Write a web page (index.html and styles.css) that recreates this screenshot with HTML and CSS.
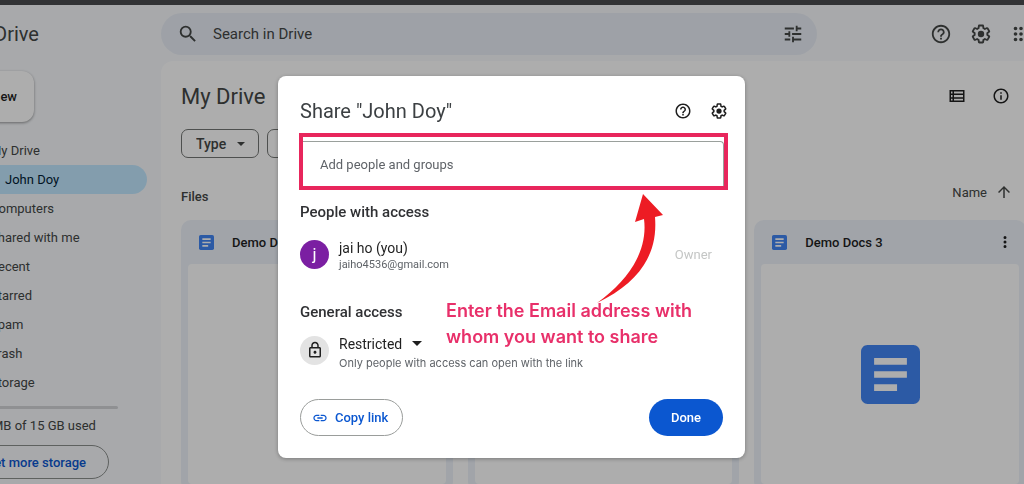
FILE: index.html
```html
<!DOCTYPE html>
<html lang="en">
<head>
    <meta charset="UTF-8">
    <meta name="viewport" content="width=device-width, initial-scale=1.0">
    <title>My Drive - Google Drive</title>
    <link rel="stylesheet" href="styles.css">
</head>
<body>

<!-- shared icons -->
<svg class="sprite" aria-hidden="true">
    <symbol id="help" viewBox="0 0 24 24">
        <path d="M11 18h2v-2h-2v2zm1-16C6.48 2 2 6.48 2 12s4.48 10 10 10 10-4.48 10-10S17.52 2 12 2zm0 18c-4.41 0-8-3.59-8-8s3.59-8 8-8 8 3.59 8 8-3.59 8-8 8zm0-14c-2.21 0-4 1.79-4 4h2c0-1.1.9-2 2-2s2 .9 2 2c0 2-3 1.75-3 5h2c0-2.25 3-2.5 3-5 0-2.21-1.79-4-4-4z"/>
    </symbol>
    <symbol id="gear" viewBox="0 0 24 24">
        <path d="M13.85 22.25h-3.7c-.74 0-1.36-.54-1.45-1.27l-.27-1.89c-.27-.14-.53-.29-.79-.46l-1.8.72c-.7.26-1.47-.03-1.81-.65L2.2 15.53c-.35-.66-.2-1.44.36-1.88l1.53-1.19c-.01-.15-.02-.3-.02-.46 0-.15.01-.31.02-.46l-1.52-1.19c-.59-.45-.74-1.26-.37-1.88l1.85-3.19c.34-.62 1.11-.9 1.79-.63l1.81.73c.26-.17.52-.32.78-.46l.27-1.91c.09-.7.71-1.25 1.44-1.25h3.7c.74 0 1.36.54 1.45 1.27l.27 1.89c.27.14.53.29.79.46l1.8-.72c.71-.26 1.48.03 1.82.65l1.84 3.18c.36.66.2 1.44-.36 1.88l-1.52 1.19c.01.15.02.3.02.46s-.01.31-.02.46l1.52 1.19c.56.45.72 1.23.37 1.86l-1.86 3.22c-.34.62-1.11.9-1.8.63l-1.8-.72c-.26.17-.52.32-.78.46l-.27 1.91c-.1.68-.72 1.22-1.46 1.22zm-3.23-2h2.76l.37-2.55.53-.22c.44-.18.88-.44 1.34-.78l.45-.34 2.38.96 1.38-2.4-2.03-1.58.07-.56c.03-.26.06-.51.06-.78s-.03-.53-.06-.78l-.07-.56 2.03-1.58-1.39-2.4-2.39.96-.45-.35c-.42-.32-.87-.58-1.33-.77l-.52-.22-.37-2.55h-2.76l-.37 2.55-.53.21c-.44.19-.88.44-1.34.79l-.45.33-2.38-.95-1.39 2.39 2.03 1.58-.07.56a7 7 0 0 0-.06.79c0 .26.02.53.06.78l.07.56-2.03 1.58 1.38 2.4 2.39-.96.45.35c.43.33.86.58 1.33.77l.53.22.38 2.55z"/>
        <circle cx="12" cy="12" r="3.5"/>
    </symbol>
    <symbol id="caret" viewBox="0 0 10 5">
        <path d="M0 0h10L5 5z"/>
    </symbol>
    <symbol id="doc" viewBox="0 0 18 18">
        <path fill="#4285f4" d="M2 0h14a2 2 0 0 1 2 2v14a2 2 0 0 1-2 2H2a2 2 0 0 1-2-2V2c0-1.100.9-2 2-2z"/>
        <path fill="#fff" d="M4 4h10v2H4zM4 8h10v2H4zM4 12h7v2H4z"/>
    </symbol>
</svg>

<div class="browser-edge"></div>

<div class="app">
    <aside class="sidebar">
        <div class="brand">Drive</div>
        <button class="new-btn" type="button">New</button>
        <nav class="nav">
            <a href="#">My Drive</a>
            <a href="#" class="active">John Doy</a>
            <a href="#">Computers</a>
            <a href="#">Shared with me</a>
            <a href="#">Recent</a>
            <a href="#">Starred</a>
            <a href="#">Spam</a>
            <a href="#">Trash</a>
            <a href="#">Storage</a>
        </nav>
        <div class="quota-bar"></div>
        <p class="quota">MB of 15 GB used</p>
        <button class="storage-btn" type="button">Get more storage</button>
    </aside>

    <div class="content">
        <header class="topbar">
            <div class="search">
                <svg width="22" height="22" viewBox="0 0 24 24"><path d="M15.5 14h-.79l-.28-.27A6.47 6.47 0 0 0 16 9.500 6.500 6.500 0 1 0 9.500 16c1.610 0 3.090-.59 4.230-1.570l.27.28v.79l5 4.990L20.490 19l-4.990-5zm-6 0C7.010 14 5 11.990 5 9.500S7.010 5 9.500 5 14 7.010 14 9.500 11.990 14 9.500 14z"/></svg>
                <input type="text" placeholder="Search in Drive" aria-label="Search in Drive">
                <svg width="22" height="22" viewBox="0 0 24 24"><path d="M3 17v2h6v-2H3zM3 5v2h10V5H3zm10 16v-2h8v-2h-8v-2h-2v6h2zM7 9v2H3v2h4v2h2V9H7zm14 4v-2H11v2h10zm-6-4h2V7h4V5h-4V3h-2v6z"/></svg>
            </div>
            <div class="top-icons">
                <button class="icon-btn" type="button" aria-label="Help"><svg width="22" height="22"><use href="#help"/></svg></button>
                <button class="icon-btn" type="button" aria-label="Settings"><svg width="22" height="22"><use href="#gear"/></svg></button>
                <button class="icon-btn" type="button" aria-label="Apps"><svg width="22" height="22" viewBox="0 0 24 24"><path d="M6 8a2 2 0 1 0 0-4 2 2 0 0 0 0 4zm6 0a2 2 0 1 0 0-4 2 2 0 0 0 0 4zm6 0a2 2 0 1 0 0-4 2 2 0 0 0 0 4zM6 14a2 2 0 1 0 0-4 2 2 0 0 0 0 4zm6 0a2 2 0 1 0 0-4 2 2 0 0 0 0 4zm6 0a2 2 0 1 0 0-4 2 2 0 0 0 0 4zM6 20a2 2 0 1 0 0-4 2 2 0 0 0 0 4zm6 0a2 2 0 1 0 0-4 2 2 0 0 0 0 4zm6 0a2 2 0 1 0 0-4 2 2 0 0 0 0 4z"/></svg></button>
            </div>
        </header>

        <main class="surface">
            <div class="title-row">
                <h1>My Drive</h1>
                <div class="view-icons">
                    <button class="icon-btn" type="button" aria-label="List view"><svg width="18" height="18" viewBox="0 0 24 24"><path d="M2 4v16h20V4H2zm4 2v2.500H4V6h2zm-2 4.500h2v3H4v-3zm0 5h2V18H4v-2.500zM20 18H8v-2.500h12V18zm0-4.500H8v-3h12v3zm0-5H8V6h12v2.500z"/></svg></button>
                    <button class="icon-btn" type="button" aria-label="Details"><svg width="18" height="18" viewBox="0 0 24 24"><path d="M11 7h2v2h-2V7zm0 4h2v6h-2v-6zm1-9C6.480 2 2 6.480 2 12s4.480 10 10 10 10-4.480 10-10S17.520 2 12 2zm0 18c-4.410 0-8-3.590-8-8s3.590-8 8-8 8 3.590 8 8-3.590 8-8 8z"/></svg></button>
                </div>
            </div>

            <div class="chips">
                <div class="chip">
                    <select aria-label="Type"><option>Type</option></select>
                    <svg width="8" height="4"><use href="#caret"/></svg>
                </div>
                <div class="chip">
                    <select aria-label="People"><option>People</option></select>
                    <svg width="8" height="4"><use href="#caret"/></svg>
                </div>
            </div>

            <div class="list-head">
                <h2>Files</h2>
                <button class="sort" type="button">Name
                    <svg width="18" height="18" viewBox="0 0 24 24"><path d="M4 12l1.410 1.410L11 7.830V20h2V7.830l5.580 5.590L20 12l-8-8-8 8z"/></svg>
                </button>
            </div>

            <div class="cards">
                <article class="card">
                    <div class="card-head">
                        <svg width="15" height="15"><use href="#doc"/></svg>
                        <h3>Demo Docs 1</h3>
                        <svg width="18" height="18" viewBox="0 0 24 24"><path d="M12 8a2 2 0 1 0 0-4 2 2 0 0 0 0 4zm0 6a2 2 0 1 0 0-4 2 2 0 0 0 0 4zm0 6a2 2 0 1 0 0-4 2 2 0 0 0 0 4z"/></svg>
                    </div>
                    <div class="thumb"></div>
                </article>
                <article class="card">
                    <div class="card-head">
                        <svg width="15" height="15"><use href="#doc"/></svg>
                        <h3>Demo Docs 2</h3>
                        <svg width="18" height="18" viewBox="0 0 24 24"><path d="M12 8a2 2 0 1 0 0-4 2 2 0 0 0 0 4zm0 6a2 2 0 1 0 0-4 2 2 0 0 0 0 4zm0 6a2 2 0 1 0 0-4 2 2 0 0 0 0 4z"/></svg>
                    </div>
                    <div class="thumb"></div>
                </article>
                <article class="card">
                    <div class="card-head">
                        <svg width="15" height="15"><use href="#doc"/></svg>
                        <h3>Demo Docs 3</h3>
                        <svg width="18" height="18" viewBox="0 0 24 24"><path d="M12 8a2 2 0 1 0 0-4 2 2 0 0 0 0 4zm0 6a2 2 0 1 0 0-4 2 2 0 0 0 0 4zm0 6a2 2 0 1 0 0-4 2 2 0 0 0 0 4z"/></svg>
                    </div>
                    <div class="thumb"><svg width="59" height="59"><use href="#doc"/></svg></div>
                </article>
            </div>
        </main>
    </div>
</div>

<div class="backdrop">
    <div class="share" role="dialog" aria-labelledby="shareTitle">
        <div class="share-head">
            <h2 id="shareTitle">Share "John Doy"</h2>
            <button class="icon-btn" type="button" aria-label="Help"><svg width="18" height="18"><use href="#help"/></svg></button>
            <button class="icon-btn" type="button" aria-label="Settings"><svg width="18" height="18"><use href="#gear"/></svg></button>
        </div>

        <div class="highlight">
            <input type="text" placeholder="Add people and groups" aria-label="Add people and groups">
        </div>

        <h3>People with access</h3>
        <div class="row">
            <div class="avatar">j</div>
            <div class="who">
                <div class="name">jai ho (you)</div>
                <div class="email">jaiho4536@gmail.com</div>
            </div>
            <div class="role">Owner</div>
        </div>

        <h3>General access</h3>
        <div class="row access">
            <div class="lock">
                <svg width="18" height="18" viewBox="0 0 24 24"><path d="M18 8h-1V6c0-2.760-2.240-5-5-5S7 3.240 7 6v2H6c-1.100 0-2 .9-2 2v10c0 1.100.9 2 2 2h12c1.100 0 2-.9 2-2V10c0-1.100-.9-2-2-2zM9 6c0-1.660 1.340-3 3-3s3 1.340 3 3v2H9V6zm9 14H6V10h12v10zm-6-3c1.100 0 2-.9 2-2s-.9-2-2-2-2 .9-2 2 .9 2 2 2z"/></svg>
            </div>
            <div class="who">
                <div class="pick">
                    <select aria-label="General access"><option>Restricted</option></select>
                    <svg width="10" height="5"><use href="#caret"/></svg>
                </div>
                <div class="hint">Only people with access can open with the link</div>
            </div>
        </div>

        <div class="actions">
            <button class="copy-btn" type="button">
                <svg width="16" height="16" viewBox="0 0 24 24"><path d="M3.900 12c0-1.710 1.390-3.100 3.100-3.100h4V7H7c-2.760 0-5 2.240-5 5s2.240 5 5 5h4v-1.900H7c-1.710 0-3.100-1.390-3.100-3.100zM8 13h8v-2H8v2zm9-6h-4v1.900h4c1.710 0 3.100 1.390 3.100 3.100s-1.390 3.100-3.100 3.100h-4V17h4c2.760 0 5-2.240 5-5s-2.240-5-5-5z"/></svg>
                Copy link
            </button>
            <button class="done-btn" type="button">Done</button>
        </div>

        <!-- tutorial note over the dialog -->
        <svg class="arrow" width="68" height="110" viewBox="0 0 68 110">
            <path fill="#ed1c24" d="M47 0L67 21L59 23C62 60 44 88 1 109C34 85 52 56 48 25L39 28Z"/>
        </svg>
        <p class="note">Enter the Email address with<br>whom you want to share</p>
    </div>
</div>

</body>
</html>
```

FILE: styles.css
```css
* {
    box-sizing: border-box;
}
body {
    margin: 0;
    min-height: 100vh;
    overflow: hidden;
    background-color: #f8fafd;
    color: #444746;
    font-family: Roboto, Arial, sans-serif;
    font-size: 13px;
}
h1, h2, h3, p {
    margin: 0;
    font-weight: 400;
}
button, input, select {
    font: inherit;
    color: inherit;
    border: none;
    background: none;
    padding: 0;
    outline: none;
}
select {
    appearance: none;
}
svg {
    display: block;
    flex: none;
    fill: currentColor;
}
.sprite {
    display: none;
}
.browser-edge {
    height: 5px;
    background-color: #323335;
}
.icon-btn {
    display: block;
}

/* Sidebar, scrolled partly out of the window */
.app {
    display: flex;
    height: calc(100vh - 5px);
    margin-left: -80px;
}
.sidebar {
    flex: none;
    width: 241px;
}
.brand {
    height: 58px;
    padding-left: 74px;
    font-size: 20px;
    line-height: 58px;
}
.new-btn {
    display: block;
    width: 98px;
    height: 51px;
    margin: 8px 0 14px 16px;
    padding-right: 17px;
    border-radius: 12px;
    background-color: #fff;
    box-shadow: 0 1px 3px rgba(0, 0, 0, 0.4);
    color: #1f1f1f;
    font-weight: 500;
    text-align: right;
}
.nav a {
    display: block;
    height: 29px;
    margin-right: 14px;
    padding-left: 70px;
    border-radius: 15px;
    color: inherit;
    line-height: 29px;
    text-decoration: none;
}
.nav a.active {
    padding-left: 85px;
    background-color: #c2e7ff;
    color: #001d35;
}
.quota-bar {
    height: 3px;
    margin: 9px 43px 8px 0;
    border-radius: 2px;
    background-color: #d3d5d8;
}
.quota {
    padding-left: 72px;
    line-height: 18px;
}
.storage-btn {
    display: block;
    width: 159px;
    height: 34px;
    margin: 10px 0 0 30px;
    padding-right: 22px;
    border: 1px solid #8b8f8d;
    border-radius: 17px;
    color: #0b57d0;
    font-weight: 500;
    text-align: right;
}

/* Top bar */
.content {
    display: flex;
    flex: 1;
    flex-direction: column;
    min-width: 0;
}
.topbar {
    display: flex;
    flex: none;
    align-items: center;
    height: 56px;
    padding-top: 2px;
}
.search {
    display: flex;
    flex: 1;
    align-items: center;
    gap: 14px;
    height: 42px;
    padding: 0 13px 0 16px;
    border-radius: 21px;
    background-color: #e9eef6;
}
.search input {
    flex: 1;
    min-width: 0;
    font-size: 15px;
}
.search input::placeholder {
    color: #444746;
    opacity: 1;
}
.top-icons {
    display: flex;
    gap: 18px;
    margin: 0 -8px 0 113px;
}

/* Main panel */
.surface {
    flex: 1;
    padding: 20px 0 0 20px;
    border-radius: 12px 0 0 0;
    background-color: #fff;
}
.title-row {
    display: flex;
    align-items: center;
    justify-content: space-between;
    height: 30px;
}
.title-row h1 {
    font-size: 22px;
}
.view-icons {
    display: flex;
    gap: 26px;
    margin-right: 14px;
    color: #1f1f1f;
}
.chips {
    display: flex;
    gap: 8px;
    margin-top: 18px;
}
.chip {
    display: flex;
    align-items: center;
    width: 78px;
    height: 29px;
    padding: 0 13px 0 14px;
    border: 1px solid #747775;
    border-radius: 7px;
    font-size: 14px;
    font-weight: 500;
}
.chip select {
    flex: 1;
    min-width: 0;
}
.list-head {
    display: flex;
    align-items: center;
    justify-content: space-between;
    height: 30px;
    margin: 23px 11px 9px 0;
}
.list-head h2 {
    font-size: 13px;
    font-weight: 500;
}
.sort {
    display: flex;
    align-items: center;
    gap: 8px;
    height: 20px;
    margin-bottom: 8px;
}
.cards {
    display: grid;
    grid-template-columns: repeat(3, 1fr);
    gap: 15px;
    margin-right: -2px;
}
.card {
    padding: 0 7px 7px;
    border-radius: 10px;
    background-color: #edf2fa;
}
.card-head {
    display: flex;
    align-items: center;
    height: 44px;
    padding: 0 5px 0 11px;
    color: #1f1f1f;
}
.card-head h3 {
    flex: 1;
    margin-left: 18px;
    font-size: 13px;
    font-weight: 500;
}
.thumb {
    display: flex;
    align-items: center;
    justify-content: center;
    height: 220px;
    border-radius: 4px;
    background-color: #fff;
}

/* Share dialog */
.backdrop {
    position: fixed;
    inset: 5px 0 0;
    display: flex;
    align-items: flex-start;
    justify-content: center;
    padding: 71px 1px 0 0;
    background-color: rgba(0, 0, 0, 0.32);
}
.share {
    position: relative;
    width: 467px;
    padding: 16px 22px 22px;
    border-radius: 8px;
    background-color: #fff;
    box-shadow: 0 1px 4px rgba(0, 0, 0, 0.3);
    color: #1f1f1f;
}
.share-head {
    display: flex;
    align-items: center;
    gap: 18px;
    height: 37px;
    margin-right: -5px;
}
.share-head h2 {
    flex: 1;
    color: #3c4043;
    font-size: 20px;
}
.highlight {
    margin: 4px -5px 0 -1px;
    padding-top: 4px;
    border: 4px solid #e8265c;
}
.highlight input {
    display: block;
    width: 100%;
    height: 45px;
    padding: 0 17px;
    border: 1px solid #9aa09c;
    border-width: 1px 1px 0 0;
    border-radius: 0 4px 0 0;
}
.highlight input::placeholder {
    color: #5f6368;
    opacity: 1;
}
.share h3 {
    margin-top: 12px;
    color: #303134;
    font-size: 15px;
    font-weight: 500;
    line-height: 20px;
}
.row {
    display: flex;
    align-items: center;
    gap: 10px;
    height: 40px;
    margin-top: 12px;
}
.avatar, .lock {
    display: flex;
    flex: none;
    align-items: center;
    justify-content: center;
    width: 29px;
    height: 29px;
    border-radius: 50%;
}
.avatar {
    background-color: #7b1fa2;
    color: #fff;
    font-size: 17px;
}
.lock {
    background-color: #e3e3e3;
}
.who {
    flex: 1;
    padding-top: 3px;
}
.name {
    font-size: 14px;
    line-height: 18px;
}
.email, .hint {
    color: #5f6368;
    font-size: 11px;
    line-height: 16px;
}
.hint {
    font-family: Inter, Arial, sans-serif;
}
.role {
    margin-right: 11px;
    color: #c4c6c5;
}
.share .row + h3 {
    margin-top: 28px;
}
.share .access {
    margin-top: 8px;
}
.pick {
    display: flex;
    align-items: center;
    gap: 9px;
    height: 22px;
    font-size: 14px;
}
.actions {
    display: flex;
    justify-content: space-between;
    margin-top: 29px;
}
.copy-btn, .done-btn {
    height: 37px;
    border-radius: 19px;
    font-weight: 500;
}
.copy-btn {
    display: flex;
    align-items: center;
    gap: 7px;
    padding: 0 14px 0 11px;
    border: 1px solid #9a9d9b;
    color: #0b57d0;
}
.done-btn {
    padding: 0 22px;
    background-color: #0b57d0;
    color: #fff;
}
.arrow {
    position: absolute;
    top: 118px;
    left: 318px;
}
.note {
    position: absolute;
    top: 222px;
    left: 168px;
    color: #e8306a;
    font-family: Inter, Arial, sans-serif;
    font-size: 18px;
    font-weight: 600;
    line-height: 26px;
    white-space: nowrap;
}
```
